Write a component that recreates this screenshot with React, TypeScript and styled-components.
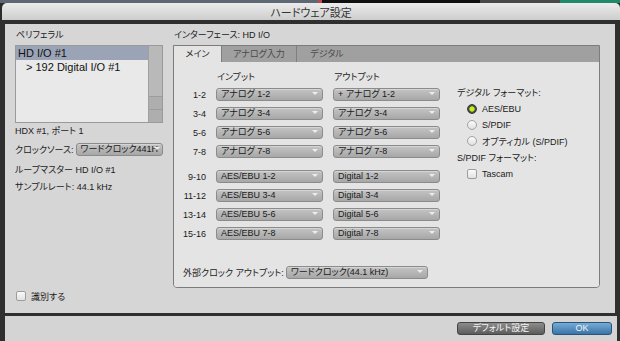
import React from "react";
import styled, { createGlobalStyle } from "styled-components";

const GlobalStyle = createGlobalStyle`
  html, body {
    margin: 0;
    padding: 0;
    background: #2c2c2c;
  }
  body {
    width: 620px;
    height: 341px;
    overflow: hidden;
    font-family: "Liberation Sans", "Noto Sans CJK JP", sans-serif;
    font-feature-settings: "palt";
    color: #1a1a1a;
  }
`;

const TopStrip = styled.div`
  height: 3px;
  background: linear-gradient(
    to right,
    #5d6872 0 318px,
    #c04848 318px 322px,
    #111 322px 480px,
    #4a4a4a 480px 560px,
    #1f8a6a 560px
  );
`;

const TitleBar = styled.div`
  height: 17px;
  margin-left: 2px;
  border-radius: 5px 5px 0 0;
  background: linear-gradient(#ececec, #cdcdcd);
  display: flex;
  align-items: center;
  justify-content: center;
  font-size: 11px;
  color: #333;
`;

const Frame = styled.div`
  background: #2f2f2f;
  padding: 4px 5px 0 5px;
  display: flex;
  flex-direction: column;
  gap: 3px;
`;

const Main = styled.div`
  height: 289px;
  box-sizing: border-box;
  background: #d6d6d6;
  padding: 5px 15px 9px 10px;
  display: flex;
  gap: 10px;
`;

const LeftCol = styled.div`
  width: 148px;
  display: flex;
  flex-direction: column;
`;

const RightCol = styled.div`
  width: 427px;
  display: flex;
  flex-direction: column;
`;

const SectionLabel = styled.div`
  height: 12px;
  line-height: 12px;
  font-size: 9px;
  padding-left: 1px;
  margin-bottom: 4px;
`;

const List = styled.div`
  height: 78px;
  box-sizing: border-box;
  border: 1px solid #9a9a9a;
  background: #e9e9e9;
  display: flex;
`;

const ListItems = styled.div`
  flex: 1;
`;

const ListRow = styled.div<{ $selected?: boolean; $indent?: number }>`
  height: 14px;
  line-height: 14px;
  font-size: 11px;
  padding-left: ${(p) => p.$indent ?? 2}px;
  background: ${(p) => (p.$selected ? "#9aa4b6" : "transparent")};
  color: #111;
`;

const Scrollbar = styled.div`
  width: 13px;
  border-left: 1px solid #a0a0a0;
  display: flex;
  flex-direction: column;
`;

const ScrollThumb = styled.div`
  flex: 1;
  background: #b9b9b9;
`;

const ScrollArrow = styled.div`
  height: 12px;
  background: #aeaeae;
  border-top: 1px solid #9c9c9c;
`;

const InfoText = styled.div<{ $mt: number }>`
  margin-top: ${(p) => p.$mt}px;
  height: 12px;
  line-height: 12px;
  font-size: 9px;
`;

const ClockRow = styled.div`
  margin-top: 6px;
  display: flex;
  align-items: center;
  gap: 3px;
  font-size: 9px;
  white-space: nowrap;
`;

const Select = styled.div<{ $w?: number; $tight?: boolean }>`
  position: relative;
  box-sizing: border-box;
  width: ${(p) => (p.$w ? `${p.$w}px` : "auto")};
  flex: ${(p) => (p.$w ? "none" : "1")};
  height: 13px;
  padding: ${(p) => (p.$tight ? "0 9px 0 3px" : "0 13px 0 4px")};
  border: 1px solid #8b8b8b;
  border-radius: 3px;
  background: linear-gradient(#c4c4c4, #a7a7a7);
  box-shadow: inset 0 1px 0 rgba(255, 255, 255, 0.3);
  font-size: 9px;
  line-height: 11px;
  color: #1a1a1a;
  white-space: nowrap;
  overflow: hidden;

  &::after {
    content: "";
    position: absolute;
    right: ${(p) => (p.$tight ? 2 : 4)}px;
    top: 3px;
    border-left: 3px solid transparent;
    border-right: 3px solid transparent;
    border-top: 3px solid #ededed;
  }
`;

const CheckRow = styled.label<{ $indent?: number }>`
  display: flex;
  align-items: center;
  gap: 5px;
  height: 16px;
  padding-left: ${(p) => p.$indent ?? 0}px;
  font-size: 9px;
`;

const LeftCheck = styled(CheckRow)`
  margin-top: auto;
  padding-left: 1px;
`;

const CheckBox = styled.span`
  width: 10px;
  height: 10px;
  box-sizing: border-box;
  border: 1px solid #9d9d9d;
  border-radius: 2px;
  background: linear-gradient(#fafafa, #e2e2e2);
`;

const TabBox = styled.div`
  height: 243px;
  box-sizing: border-box;
  border: 1px solid #7c7c7c;
  border-radius: 0 0 4px 4px;
  display: flex;
  flex-direction: column;
  overflow: hidden;
`;

const TabBar = styled.div`
  height: 16px;
  background: #a0a0a0;
  display: flex;
`;

const Tab = styled.div<{ $active?: boolean; $last?: boolean; $w: number }>`
  width: ${(p) => p.$w}px;
  box-sizing: border-box;
  border-right: ${(p) => (p.$last ? "none" : "1px solid #7f7f7f")};
  background: ${(p) => (p.$active ? "#e4e4e4" : "transparent")};
  color: ${(p) => (p.$active ? "#1e1e1e" : "#4a4a4a")};
  font-size: 9px;
  line-height: 16px;
  text-align: center;
`;

const Panel = styled.div`
  flex: 1;
  background: #e4e4e4;
  padding: 8px 0 0 0;
  display: flex;
  flex-direction: column;
`;

const TopArea = styled.div`
  display: flex;
`;

const ChannelTable = styled.div`
  display: flex;
  flex-direction: column;
`;

const ChannelRow = styled.div`
  display: grid;
  grid-template-columns: 32px 107px 107px;
  column-gap: 10px;
  align-items: center;
  height: 13px;
`;

const HeaderRow = styled(ChannelRow)`
  height: 12px;
  margin-bottom: 6px;
  font-size: 9px;
`;

const ColHeader = styled.div`
  padding-left: 1px;
`;

const Group = styled.div<{ $mt?: number }>`
  display: flex;
  flex-direction: column;
  gap: 6px;
  margin-top: ${(p) => p.$mt ?? 0}px;
`;

const RowLabel = styled.div`
  text-align: right;
  font-size: 9px;
`;

const FormatCol = styled.div`
  margin: 17px 0 0 17px;
  display: flex;
  flex-direction: column;
`;

const FormatLabel = styled.div<{ $mt?: number }>`
  height: 12px;
  line-height: 12px;
  font-size: 9px;
  margin-top: ${(p) => p.$mt ?? 0}px;
  margin-bottom: 2px;
`;

const Radio = styled.span<{ $checked?: boolean }>`
  width: 10px;
  height: 10px;
  box-sizing: border-box;
  border-radius: 50%;
  border: 1px solid ${(p) => (p.$checked ? "#3a3a3a" : "#a2a2a2")};
  background: ${(p) =>
    p.$checked
      ? "radial-gradient(circle, #c4f020 0 2px, #9acb10 2.5px, #4a4a4a 3px)"
      : "linear-gradient(#fbfbfb, #e0e0e0)"};
`;

const ExtClockRow = styled.div`
  margin-top: 26px;
  padding-left: 9px;
  display: flex;
  align-items: center;
  gap: 2px;
  font-size: 9px;
`;

const Footer = styled.div`
  height: 25px;
  background: #d4d4d4;
  display: flex;
  align-items: center;
  justify-content: flex-end;
  gap: 7px;
  padding-right: 5px;
  margin-right: -2px;
`;

const Button = styled.div<{ $primary?: boolean; $w: number }>`
  width: ${(p) => p.$w}px;
  height: 13px;
  box-sizing: border-box;
  border-radius: 3px;
  border: 1px solid ${(p) => (p.$primary ? "#2b5279" : "#444")};
  background: ${(p) =>
    p.$primary
      ? "linear-gradient(#76acd6, #3874a8)"
      : "linear-gradient(#8c8c8c, #5c5c5c)"};
  color: #f4f4f4;
  font-size: 9px;
  line-height: 11px;
  text-align: center;
`;

const inputs = [
  ["1-2", "アナログ 1-2", "+ アナログ 1-2"],
  ["3-4", "アナログ 3-4", "アナログ 3-4"],
  ["5-6", "アナログ 5-6", "アナログ 5-6"],
  ["7-8", "アナログ 7-8", "アナログ 7-8"],
];

const digital = [
  ["9-10", "AES/EBU 1-2", "Digital 1-2"],
  ["11-12", "AES/EBU 3-4", "Digital 3-4"],
  ["13-14", "AES/EBU 5-6", "Digital 5-6"],
  ["15-16", "AES/EBU 7-8", "Digital 7-8"],
];

const formats = ["AES/EBU", "S/PDIF", "オプティカル (S/PDIF)"];

const App = () => {
  return (
    <>
      <GlobalStyle />
      <TopStrip />
      <TitleBar>ハードウェア設定</TitleBar>
      <Frame>
        <Main>
          <LeftCol>
            <SectionLabel>ペリフェラル</SectionLabel>
            <List>
              <ListItems>
                <ListRow $selected>HD I/O #1</ListRow>
                <ListRow $indent={10}>&gt; 192 Digital I/O #1</ListRow>
              </ListItems>
              <Scrollbar>
                <ScrollThumb />
                <ScrollArrow />
                <ScrollArrow />
              </Scrollbar>
            </List>
            <InfoText $mt={2}>HDX #1, ポート 1</InfoText>
            <ClockRow>
              クロックソース:
              <Select $tight>ワードクロック441H</Select>
            </ClockRow>
            <InfoText $mt={8}>ループマスター HD I/O #1</InfoText>
            <InfoText $mt={5}>サンプルレート: 44.1 kHz</InfoText>
            <LeftCheck>
              <CheckBox />
              識別する
            </LeftCheck>
          </LeftCol>
          <RightCol>
            <SectionLabel>インターフェース: HD I/O</SectionLabel>
            <TabBox>
              <TabBar>
                <Tab $active $w={48}>メイン</Tab>
                <Tab $w={75}>アナログ入力</Tab>
                <Tab $last $w={60}>デジタル</Tab>
              </TabBar>
              <Panel>
                <TopArea>
                  <ChannelTable>
                    <HeaderRow>
                      <span />
                      <ColHeader>インプット</ColHeader>
                      <ColHeader>アウトプット</ColHeader>
                    </HeaderRow>
                    <Group>
                      {inputs.map(([ch, inp, out]) => (
                        <ChannelRow key={ch}>
                          <RowLabel>{ch}</RowLabel>
                          <Select>{inp}</Select>
                          <Select>{out}</Select>
                        </ChannelRow>
                      ))}
                    </Group>
                    <Group $mt={12}>
                      {digital.map(([ch, inp, out]) => (
                        <ChannelRow key={ch}>
                          <RowLabel>{ch}</RowLabel>
                          <Select>{inp}</Select>
                          <Select>{out}</Select>
                        </ChannelRow>
                      ))}
                    </Group>
                  </ChannelTable>
                  <FormatCol>
                    <FormatLabel>デジタル フォーマット:</FormatLabel>
                    {formats.map((f, i) => (
                      <CheckRow key={f} $indent={10}>
                        <Radio $checked={i === 0} />
                        {f}
                      </CheckRow>
                    ))}
                    <FormatLabel $mt={3}>S/PDIF フォーマット:</FormatLabel>
                    <CheckRow $indent={10}>
                      <CheckBox />
                      Tascam
                    </CheckRow>
                  </FormatCol>
                </TopArea>
                <ExtClockRow>
                  外部クロック アウトプット:
                  <Select $w={142}>ワードクロック(44.1 kHz)</Select>
                </ExtClockRow>
              </Panel>
            </TabBox>
          </RightCol>
        </Main>
        <Footer>
          <Button $w={88}>デフォルト設定</Button>
          <Button $primary $w={60}>
            OK
          </Button>
        </Footer>
      </Frame>
    </>
  );
};

export default App;
